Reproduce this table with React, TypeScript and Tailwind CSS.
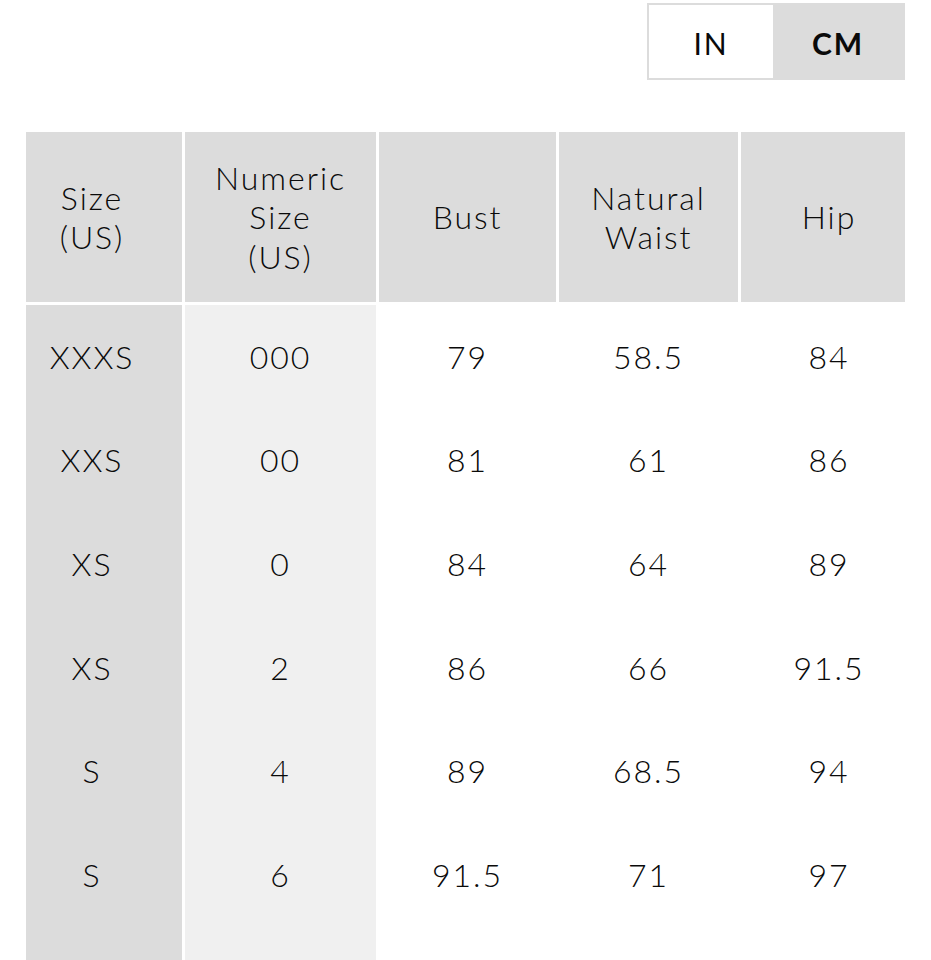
import type { ReactNode } from "react";

const cols = "grid-cols-[156px_191px_177px_179px_164px]";

const rows = [
  ["XXXS", "000", "79", "58.5", "84"],
  ["XXS", "00", "81", "61", "86"],
  ["XS", "0", "84", "64", "89"],
  ["XS", "2", "86", "66", "91.5"],
  ["S", "4", "89", "68.5", "94"],
  ["S", "6", "91.5", "71", "97"],
];

// first column sits a bit left of centre, last a bit right
const pad = ["pr-[24px]", "", "", "", "pl-[12px]"];

function HeadCell({ children, className = "" }: { children: ReactNode; className?: string }) {
  return (
    <div className={`bg-[#dcdcdc] flex items-center justify-center text-center leading-[39.5px] ${className}`}>
      {children}
    </div>
  );
}

export default function App() {
  return (
    <div
      className="h-[960px] w-[931px] overflow-hidden bg-white text-[#0a0a0a] text-[32px] font-light tracking-[0.06em]"
      style={{ fontFamily: "Lato, 'Open Sans', sans-serif" }}
    >
      <div className="flex justify-end pt-[3px] pr-[26px]">
        <div className="flex h-[77px] border-2 border-[#dcdcdc] text-[30px]">
          <button className="w-[124px] pt-[4px] bg-white flex items-center justify-center font-normal tracking-[0.06em]">IN</button>
          <button className="w-[130px] pt-[4px] bg-[#dcdcdc] flex items-center justify-center font-bold tracking-[0.06em]">CM</button>
        </div>
      </div>

      <div className="ml-[26px] mt-[52px] w-[879px]">
        <div className={`grid ${cols} gap-x-[3px] h-[170px]`}>
          <HeadCell className={pad[0]}>
            Size
            <br />
            (US)
          </HeadCell>
          <HeadCell>
            Numeric
            <br />
            Size
            <br />
            (US)
          </HeadCell>
          <HeadCell>Bust</HeadCell>
          <HeadCell>
            Natural
            <br />
            Waist
          </HeadCell>
          <HeadCell className={pad[4]}>Hip</HeadCell>
        </div>

        <div className={`grid ${cols} gap-x-[3px] mt-[3px]`}>
          {rows.map((r, i) =>
            r.map((v, j) => (
              <div
                key={`${i}-${j}`}
                className={`h-[103.6px] flex items-center justify-center ${pad[j]} ${
                  j === 0 ? "bg-[#dcdcdc]" : j === 1 ? "bg-[#f0f0f0]" : "bg-white"
                }`}
              >
                {v}
              </div>
            ))
          )}
          <div className="h-[40px] bg-[#dcdcdc]" />
          <div className="h-[40px] bg-[#f0f0f0]" />
        </div>
      </div>
    </div>
  );
}
